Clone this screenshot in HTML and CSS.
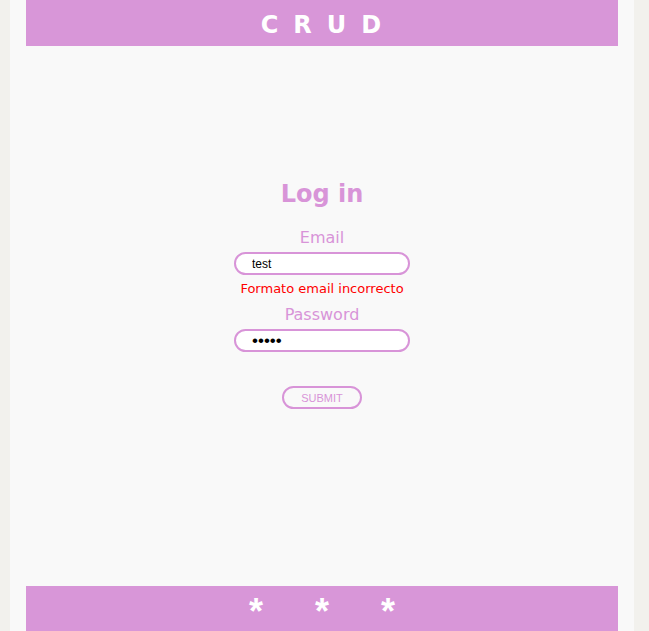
FILE: index.html
```html
<!DOCTYPE html>
<html lang="es">
<head>
<meta charset="utf-8">
<title>CRUD</title>
<link rel="stylesheet" href="styles.css">
</head>
<body>
<div class="page">
  <header class="topbar"><span class="brand">CRUD</span></header>
  <main class="main">
    <form class="login" onsubmit="return false">
      <h1 class="login-title">Log in</h1>
      <label class="field-label" for="email">Email</label>
      <input class="field-input" id="email" type="text" value="test">
      <p class="field-error">Formato email incorrecto</p>
      <label class="field-label field-label--second" for="password">Password</label>
      <input class="field-input field-input--secret" id="password" type="password" value="12345">
      <button class="submit-btn" type="submit">SUBMIT</button>
    </form>
  </main>
  <footer class="bottombar">
    <span class="star">*</span><span class="star">*</span><span class="star">*</span>
  </footer>
</div>
</body>
</html>
```
FILE: styles.css
```css
html, body {
  margin: 0;
  padding: 0;
}
body {
  background: #f2f1ed;
  font-family: "DejaVu Sans", Verdana, sans-serif;
}
.page {
  margin-left: 10px;
  width: 624px;
  min-height: 100vh;
  background: #f9f9f9;
  display: flex;
  flex-direction: column;
}
.topbar {
  margin: 0 16px;
  height: 46px;
  background: #d896d8;
  display: flex;
  justify-content: center;
  align-items: center;
  box-sizing: border-box;
  padding-top: 4px;
}
.brand {
  color: #ffffff;
  font-weight: bold;
  font-size: 24px;
  letter-spacing: 15px;
  padding-left: 13px;
  line-height: 28px;
}
.main {
  flex: 1;
  display: flex;
  justify-content: center;
  padding-top: 134px;
}
.login {
  display: flex;
  flex-direction: column;
  align-items: center;
  width: 176px;
}
.login-title {
  margin: 0;
  font-size: 24px;
  line-height: 28px;
  color: #d894d8;
  font-weight: bold;
}
.field-label {
  margin-top: 20px;
  font-size: 16px;
  line-height: 20px;
  color: #d894d8;
}
.field-label--second {
  margin-top: 8px;
}
.field-input {
  margin-top: 4px;
  box-sizing: border-box;
  width: 176px;
  height: 23px;
  border: 2px solid #d894d8;
  border-radius: 12px;
  background: #ffffff;
  padding: 0 0 0 16px;
  font-family: "Liberation Sans", Arial, sans-serif;
  font-size: 12px;
  color: #000000;
  outline: none;
}
.field-input--secret {
  font-size: 17px;
}
.field-error {
  margin: 6px 0 0;
  font-size: 13px;
  line-height: 16px;
  color: #ff0000;
  white-space: nowrap;
}
.submit-btn {
  margin-top: 34px;
  box-sizing: border-box;
  width: 80px;
  height: 23px;
  border: 2px solid #d894d8;
  border-radius: 12px;
  background: transparent;
  color: #d894d8;
  font-family: "Liberation Sans", Arial, sans-serif;
  font-size: 11px;
  padding: 0;
}
.bottombar {
  margin: 0 16px;
  height: 45px;
  background: #d896d8;
  display: flex;
  justify-content: center;
  align-items: flex-start;
  gap: 48px;
}
.star {
  color: #ffffff;
  font-weight: bold;
  font-family: "Liberation Sans", Arial, sans-serif;
  font-size: 36px;
  line-height: 36px;
  width: 18px;
  text-align: center;
  padding-top: 8px;
}
```
